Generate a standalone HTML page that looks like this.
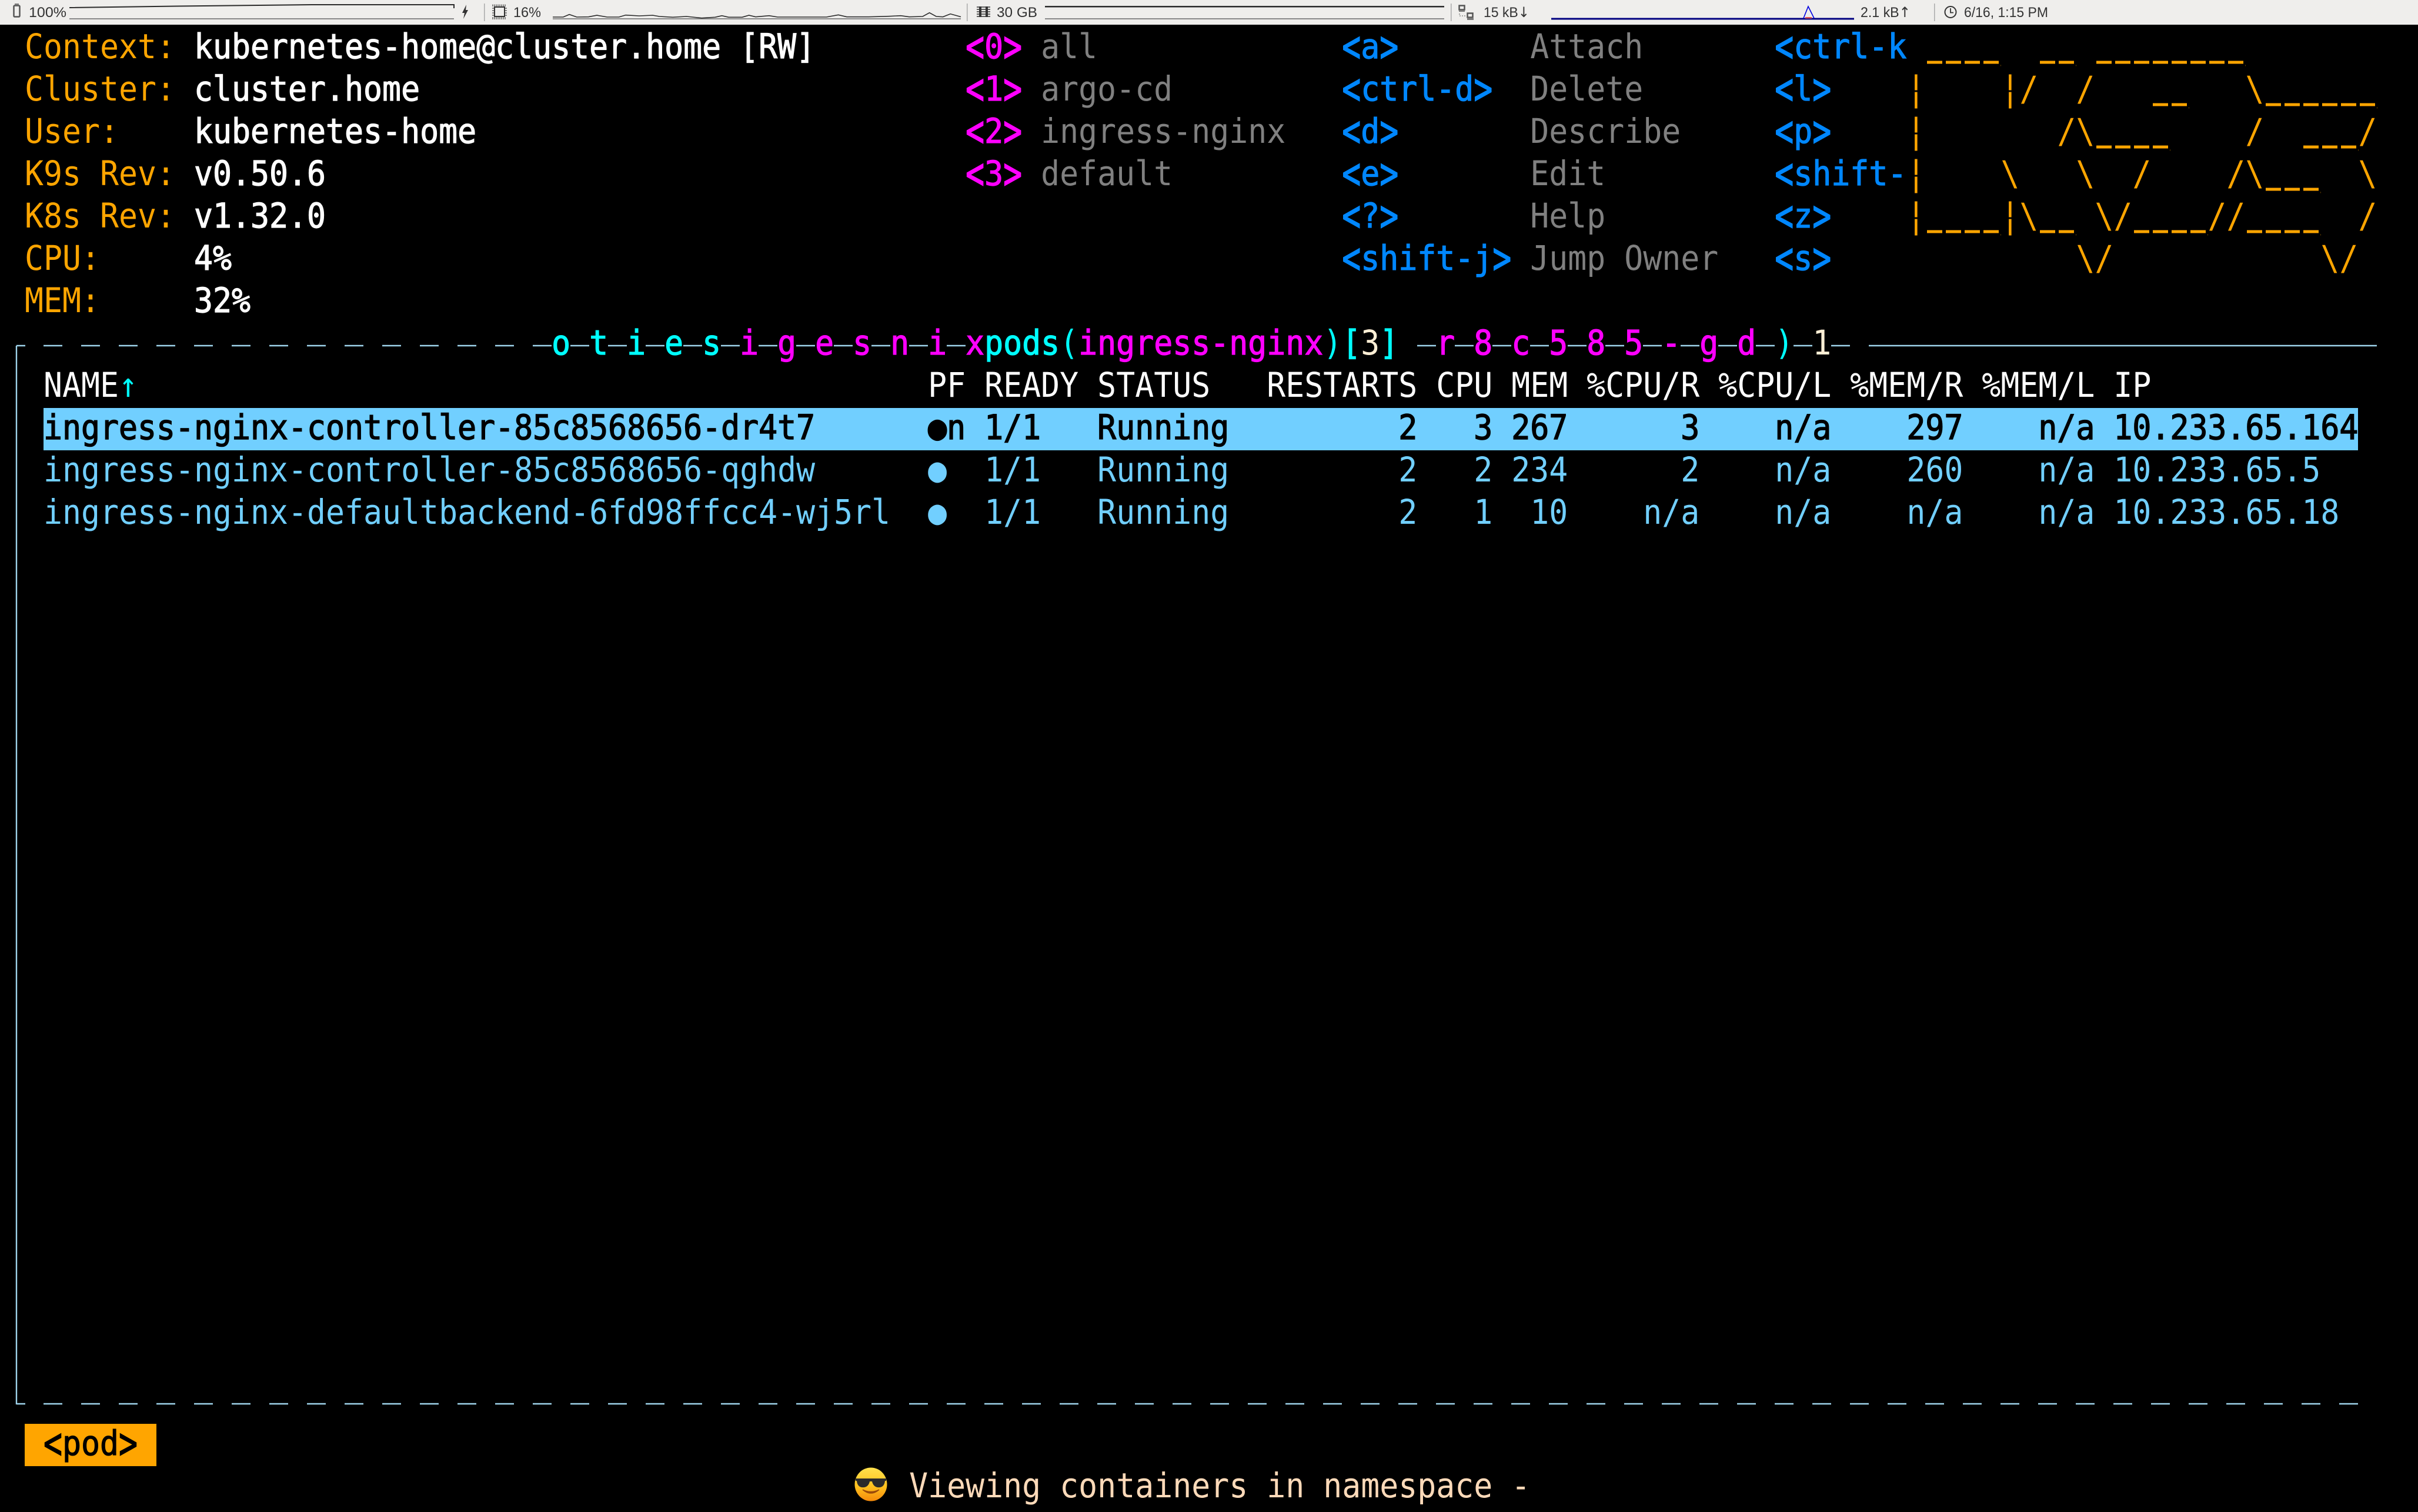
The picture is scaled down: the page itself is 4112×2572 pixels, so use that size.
<!DOCTYPE html>
<html lang="en">
<head>
<meta charset="utf-8">
<title>k9s</title>
<style>
html,body{margin:0;padding:0;background:#000;width:4112px;height:2572px;overflow:hidden}
#top{position:absolute;left:0;top:0}
#hl{position:absolute;left:74px;top:694px;width:3936px;height:72px;background:#71cfff}
#pod{position:absolute;left:42px;top:2422px;width:224px;height:72px;background:#ffa500}
#t{position:absolute;left:10px;top:43px;width:4400px;height:2529px;transform:scaleX(.9165);transform-origin:0 0;font:58px/72px "DejaVu Sans Mono","Liberation Mono",monospace;color:#fff}
.r{position:absolute;left:0;width:100%;height:72px}
.r span{position:absolute;top:0;white-space:pre}
i{display:inline-block;font-style:normal;transform:scaleY(1.3)}
.o{color:#ffa500}
.w{color:#fff;-webkit-text-stroke:1.2px #fff}
.m{color:#f0f;-webkit-text-stroke:1.2px #f0f}
.g{color:#808080}
.u{color:#0087ff;-webkit-text-stroke:1.2px #0087ff}
.c{color:#0ff;-webkit-text-stroke:1.2px #0ff}
.n{color:#0ff}
.y{color:#ffefd5}
.h{color:#fff}
.p{color:#71cfff}
.s{color:#000;-webkit-text-stroke:1.5px #000}
.k{color:#000;-webkit-text-stroke:1.2px #000}
.q{color:#ffdab9}
svg{position:absolute;left:0;top:0}
</style>
</head>
<body>
<svg id="top" width="4112" height="42" viewBox="0 0 4112 42" font-family="'Liberation Sans',sans-serif" font-size="24" fill="#333">
<rect width="4112" height="42" fill="#efeeec"/>
<rect x="23.5" y="9.5" width="10" height="19" rx="1.5" fill="none" stroke="#555" stroke-width="2.5"/>
<rect x="25" y="6" width="7" height="3" fill="#777"/>
<text x="49" y="29" textLength="64" lengthAdjust="spacingAndGlyphs">100%</text>
<path d="M118 13 L300 10.5 L530 8 L772 8 V14" fill="none" stroke="#2b2b2b" stroke-width="2"/>
<rect x="118" y="31" width="654" height="2" fill="#888"/>
<path d="M793 8 L786 22 H790 L788 32 L796 17 H792 Z" fill="#333"/>
<rect x="823" y="6" width="1.5" height="30" fill="#aaa"/>
<rect x="841" y="12" width="17" height="16" fill="none" stroke="#333" stroke-width="2"/>
<path d="M838 7.5 V11 M841 7.5 V11 M844 7.5 V11 M847 7.5 V11 M850 7.5 V11 M853 7.5 V11 M856 7.5 V11 M859 7.5 V11 M838 29 V33 M841 29 V33 M844 29 V33 M847 29 V33 M850 29 V33 M853 29 V33 M856 29 V33 M859 29 V33 M837 14 H840 M837 18 H840 M837 22 H840 M837 26 H840 M859 14 H862 M859 18 H862 M859 22 H862 M859 26 H862" stroke="#444" stroke-width="1.2"/>
<text x="873" y="29" textLength="47" lengthAdjust="spacingAndGlyphs">16%</text>
<rect x="940" y="31" width="694" height="2" fill="#888"/>
<g transform="translate(800,0) scale(.574,.3333)">
<path vector-effect="non-scaling-stroke" d="M244 87 L275 87 L293 74 L315 87 L350 86 L375 78 L405 87 L440 87 L460 77 L500 81 L540 78 L560 84 L600 88 L640 84 L685 92 L725 88 L745 80 L765 88 L805 88 L825 78 L845 86 L885 80 L910 87 L1055 87 L1090 76 L1115 86 L1180 86 L1240 83 L1275 80 L1300 86 L1340 84 L1360 65 L1380 84 L1400 86 L1422 71 L1453 86" fill="none" stroke="#2b2b2b" stroke-width="1.6"/>
</g>
<rect x="1644" y="6" width="1.5" height="30" fill="#aaa"/>
<path d="M1661 12 H1684 M1661 16 H1684 M1661 20 H1684 M1661 24 H1684 M1661 28 H1684" stroke="#333" stroke-width="1.6"/>
<rect x="1665" y="11" width="4" height="18" fill="#333"/>
<rect x="1676" y="11" width="4" height="18" fill="#333"/>
<text x="1695" y="29" textLength="69" lengthAdjust="spacingAndGlyphs">30 GB</text>
<rect x="1777" y="10" width="679" height="2.5" fill="#2b2b2b"/>
<rect x="1777" y="31" width="679" height="2" fill="#888"/>
<rect x="2467" y="6" width="1.5" height="30" fill="#aaa"/>
<rect x="2481.5" y="9.5" width="9" height="7" fill="none" stroke="#555" stroke-width="2.5"/>
<rect x="2481" y="18" width="10" height="2" fill="#777"/>
<path d="M2482 23 V27 H2493" fill="none" stroke="#888" stroke-width="1.5" stroke-dasharray="2 2"/>
<rect x="2495.5" y="22.5" width="9" height="7" fill="none" stroke="#555" stroke-width="2.5"/>
<rect x="2495" y="31" width="11" height="3" fill="#777"/>
<text x="2523" y="29" textLength="78" lengthAdjust="spacingAndGlyphs">15 kB<tspan font-family="'DejaVu Sans',sans-serif">↓</tspan></text>
<rect x="2638" y="30.5" width="515" height="3" fill="#000080"/>
<path d="M3067 31 L3075 11 L3085 31" fill="none" stroke="#0000e0" stroke-width="1.6"/>
<rect x="3070" y="29" width="11" height="2.5" fill="#e05050"/>
<text x="3164" y="29" textLength="85" lengthAdjust="spacingAndGlyphs">2.1 kB<tspan font-family="'DejaVu Sans',sans-serif">↑</tspan></text>
<rect x="3289" y="6" width="1.5" height="30" fill="#aaa"/>
<circle cx="3317" cy="20.5" r="9.5" fill="none" stroke="#333" stroke-width="2"/>
<path d="M3317 14 V21.5 H3322" fill="none" stroke="#333" stroke-width="1.8"/>
<text x="3340" y="29" textLength="143" lengthAdjust="spacingAndGlyphs">6/16, 1:15 PM</text>
</svg>

<div id="hl"></div>
<div id="pod"></div>

<svg width="4112" height="2572" viewBox="0 0 4112 2572" style="top:0">
<g fill="none" stroke="#9fd4ec" stroke-width="2.4">
<path d="M28 588 H43 M28 588 V2389 M28 2388 H43"/>
<path d="M3178 588 H4042"/>
<path d="M74 588 H1642" stroke-dasharray="32 32"/>
<path d="M2410 588 H3146" stroke-dasharray="32 32"/>
<path d="M74 2388 H4010" stroke-dasharray="32 32"/>
</g>
</svg>

<div id="t">
<div class="r" style="top:0"><span class="o" style="left:1ch">Context:</span><span class="w" style="left:10ch">kubernetes-home@cluster.home [RW]</span><span class="m" style="left:51ch"><i>&lt;</i>0<i>&gt;</i></span><span class="g" style="left:55ch">all</span><span class="u" style="left:71ch"><i>&lt;</i>a<i>&gt;</i></span><span class="g" style="left:81ch">Attach</span><span class="u" style="left:94ch"><i>&lt;</i>ctrl-k</span><span class="o" style="left:101ch"> ____  __ ________</span></div>
<div class="r" style="top:72px"><span class="o" style="left:1ch">Cluster:</span><span class="w" style="left:10ch">cluster.home</span><span class="m" style="left:51ch"><i>&lt;</i>1<i>&gt;</i></span><span class="g" style="left:55ch">argo-cd</span><span class="u" style="left:71ch"><i>&lt;</i>ctrl-d<i>&gt;</i></span><span class="g" style="left:81ch">Delete</span><span class="u" style="left:94ch"><i>&lt;</i>l<i>&gt;</i></span><span class="o" style="left:101ch">|    |/  /   __   \______</span></div>
<div class="r" style="top:144px"><span class="o" style="left:1ch">User:</span><span class="w" style="left:10ch">kubernetes-home</span><span class="m" style="left:51ch"><i>&lt;</i>2<i>&gt;</i></span><span class="g" style="left:55ch">ingress-nginx</span><span class="u" style="left:71ch"><i>&lt;</i>d<i>&gt;</i></span><span class="g" style="left:81ch">Describe</span><span class="u" style="left:94ch"><i>&lt;</i>p<i>&gt;</i></span><span class="o" style="left:101ch">|       /\____    /  ___/</span></div>
<div class="r" style="top:216px"><span class="o" style="left:1ch">K9s Rev:</span><span class="w" style="left:10ch">v0.50.6</span><span class="m" style="left:51ch"><i>&lt;</i>3<i>&gt;</i></span><span class="g" style="left:55ch">default</span><span class="u" style="left:71ch"><i>&lt;</i>e<i>&gt;</i></span><span class="g" style="left:81ch">Edit</span><span class="u" style="left:94ch"><i>&lt;</i>shift-</span><span class="o" style="left:101ch">|    \   \  /    /\___  \</span></div>
<div class="r" style="top:288px"><span class="o" style="left:1ch">K8s Rev:</span><span class="w" style="left:10ch">v1.32.0</span><span class="u" style="left:71ch"><i>&lt;</i>?<i>&gt;</i></span><span class="g" style="left:81ch">Help</span><span class="u" style="left:94ch"><i>&lt;</i>z<i>&gt;</i></span><span class="o" style="left:101ch">|____|\__ \/____//____  /</span></div>
<div class="r" style="top:360px"><span class="o" style="left:1ch">CPU:</span><span class="w" style="left:10ch">4%</span><span class="u" style="left:71ch"><i>&lt;</i>shift-j<i>&gt;</i></span><span class="g" style="left:81ch">Jump Owner</span><span class="u" style="left:94ch"><i>&lt;</i>s<i>&gt;</i></span><span class="o" style="left:101ch">         \/           \/</span></div>
<div class="r" style="top:432px"><span class="o" style="left:1ch">MEM:</span><span class="w" style="left:10ch">32%</span></div>

<div class="r" style="top:504px">
<span class="c" style="left:29ch">o</span><span class="c" style="left:31ch">t</span><span class="c" style="left:33ch">i</span><span class="c" style="left:35ch">e</span><span class="c" style="left:37ch">s</span>
<span class="m" style="left:39ch">i</span><span class="m" style="left:41ch">g</span><span class="m" style="left:43ch">e</span><span class="m" style="left:45ch">s</span><span class="m" style="left:47ch">n</span><span class="m" style="left:49ch">i</span><span class="m" style="left:51ch">x</span>
<span class="c" style="left:52ch">pods</span><span class="n" style="left:56ch">(</span><span class="m" style="left:57ch">ingress-nginx</span><span class="n" style="left:70ch">)</span><span class="c" style="left:71ch">[</span><span class="y" style="left:72ch">3</span><span class="c" style="left:73ch">]</span>
<span class="m" style="left:76ch">r</span><span class="m" style="left:78ch">8</span><span class="m" style="left:80ch">c</span><span class="m" style="left:82ch">5</span><span class="m" style="left:84ch">8</span><span class="m" style="left:86ch">5</span><span class="m" style="left:88ch">-</span><span class="m" style="left:90ch">g</span><span class="m" style="left:92ch">d</span><span class="n" style="left:94ch">)</span><span class="y" style="left:96ch">1</span>
</div>

<div class="r h" style="top:576px"><span style="left:2ch">NAME<b class="n" style="font-weight:normal">↑</b></span><span style="left:49ch">PF</span><span style="left:52ch">READY</span><span style="left:58ch">STATUS</span><span style="left:67ch">RESTARTS</span><span style="left:76ch">CPU</span><span style="left:80ch">MEM</span><span style="left:84ch">%CPU/R</span><span style="left:91ch">%CPU/L</span><span style="left:98ch">%MEM/R</span><span style="left:105ch">%MEM/L</span><span style="left:112ch">IP</span></div>

<div class="r s" style="top:648px"><span style="left:2ch">ingress-nginx-controller-85c8568656-dr4t7</span><span style="left:49ch">●n</span><span style="left:52ch">1/1</span><span style="left:58ch">Running</span><span style="left:74ch">2</span><span style="left:78ch">3</span><span style="left:80ch">267</span><span style="left:89ch">3</span><span style="left:94ch">n/a</span><span style="left:101ch">297</span><span style="left:108ch">n/a</span><span style="left:112ch">10.233.65.164</span></div>

<div class="r p" style="top:720px"><span style="left:2ch">ingress-nginx-controller-85c8568656-qghdw</span><span style="left:49ch">●</span><span style="left:52ch">1/1</span><span style="left:58ch">Running</span><span style="left:74ch">2</span><span style="left:78ch">2</span><span style="left:80ch">234</span><span style="left:89ch">2</span><span style="left:94ch">n/a</span><span style="left:101ch">260</span><span style="left:108ch">n/a</span><span style="left:112ch">10.233.65.5</span></div>

<div class="r p" style="top:792px"><span style="left:2ch">ingress-nginx-defaultbackend-6fd98ffcc4-wj5rl</span><span style="left:49ch">●</span><span style="left:52ch">1/1</span><span style="left:58ch">Running</span><span style="left:74ch">2</span><span style="left:78ch">1</span><span style="left:81ch">10</span><span style="left:87ch">n/a</span><span style="left:94ch">n/a</span><span style="left:101ch">n/a</span><span style="left:108ch">n/a</span><span style="left:112ch">10.233.65.18</span></div>

<div class="r k" style="top:2376px"><span style="left:2ch"><i>&lt;</i>pod<i>&gt;</i></span></div>
<div class="r q" style="top:2448px"><span style="left:48ch">Viewing containers in namespace -</span></div>
</div>

<svg width="4112" height="2572" viewBox="0 0 4112 2572" style="top:0">
<defs><linearGradient id="e" x1="0" y1="0" x2="0" y2="1"><stop offset="0" stop-color="#ffe14d"/><stop offset=".55" stop-color="#ffc21f"/><stop offset="1" stop-color="#f58a0b"/></linearGradient></defs>
<ellipse cx="1481" cy="2525" rx="27.5" ry="28.5" fill="url(#e)"/>
<path d="M1455 2515 H1507 V2519 H1505 C1504 2528 1499 2531 1492 2530 C1487 2529 1484 2525 1483 2520 H1479 C1478 2525 1475 2529 1470 2530 C1463 2531 1458 2528 1457 2519 H1455 Z" fill="#2a2a2a"/>
<path d="M1467 2534 Q1481 2546 1495 2534 Q1481 2541 1467 2534 Z" fill="#9a4a0a" stroke="#9a4a0a" stroke-width="1.5"/>
<path fill="none" stroke="#000" stroke-width="11" d="M3274 109H3402 M3466 109H3530 M3562 109H3818 M3658 181H3722 M3850 181H4042 M3562 253H3690 M3914 253H4010 M3850 325H3946 M3274 397H3402 M3466 397H3530 M3626 397H3754 M3818 397H3946"/>
<path fill="none" stroke="#ffa500" stroke-width="5" stroke-dasharray="26 6" d="M3277 106H3402 M3469 106H3530 M3565 106H3818 M3661 178H3722 M3853 178H4042 M3565 250H3690 M3917 250H4010 M3853 322H3946 M3277 394H3402 M3469 394H3530 M3629 394H3754 M3821 394H3946"/>
<path fill="none" stroke="#000" stroke-width="3" d="M3252 155H3264 M3412 155H3424 M3252 227H3264 M3252 299H3264 M3252 371H3264 M3412 371H3424"/>
</svg>
</body>
</html>
